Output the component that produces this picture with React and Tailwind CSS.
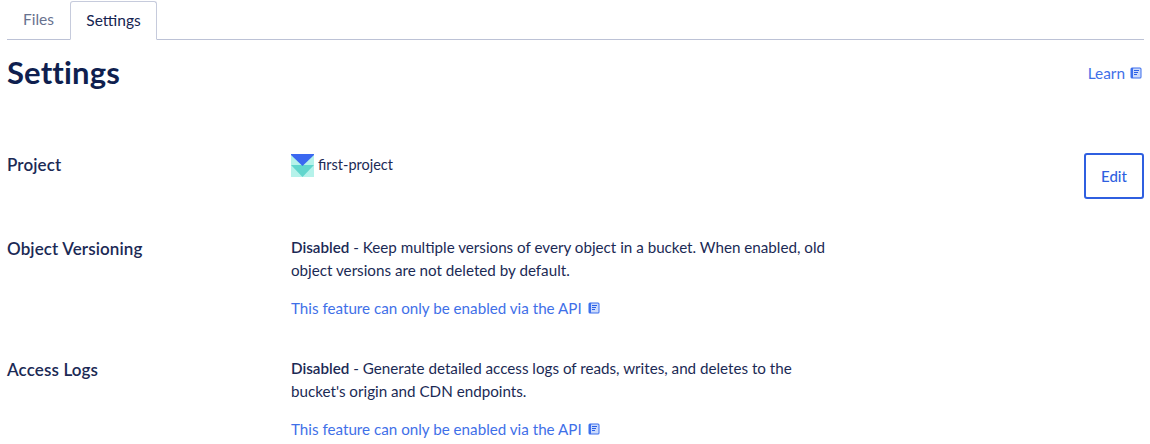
const BookIcon = () => (
  <svg width="12" height="12" viewBox="0 0 12 12" className="shrink-0">
    <rect x="0.5" y="0.5" width="11" height="11" rx="1.5" fill="#3d6fec" />
    <rect x="3" y="1.5" width="7.5" height="9" rx="0.5" fill="#cddbfb" />
    <rect x="4" y="3" width="5" height="1" fill="#2a5fe6" />
    <rect x="4" y="5" width="4" height="1" fill="#2a5fe6" />
    <rect x="4" y="7" width="3" height="1" fill="#2a5fe6" />
  </svg>
);

const ProjectIcon = () => (
  <svg width="23" height="23" viewBox="0 0 23 23" className="shrink-0">
    <rect width="23" height="23" fill="#b5f2ea" />
    <path d="M0 11 H23 L11.5 23 Z" fill="#62d6cd" />
    <path d="M0 0 H23 V1 L11.5 12 L0 1 Z" fill="#3b68f0" />
  </svg>
);

const ApiLink = () => (
  <a className="mt-[15px] flex items-center gap-[6px] text-[15.2px] leading-[22px] text-[#3f70e8]" href="#">
    <span>This feature can only be enabled via the API</span>
    <BookIcon />
  </a>
);

export default function App() {
  return (
    <div className="h-[444px] w-[1150px] overflow-hidden bg-white pl-[7px] pr-[6px] font-['Lato','Open_Sans',sans-serif] text-[#1b2a55]">
      {/* Tabs */}
      <div className="flex h-[40px] items-end border-b border-[#bcc2d6]">
        <div className="flex h-[39px] w-[63px] items-center justify-center text-[15.5px] text-[#68728f]">Files</div>
        <div className="-mb-px flex h-[39px] w-[87px] items-center justify-center rounded-t-[3px] border border-b-white border-[#c6cbdc] bg-white text-[15.5px] text-[#152450]">
          Settings
        </div>
      </div>

      {/* Header */}
      <div className="mt-[13px] flex h-[38px] items-center justify-between">
        <h1 className="text-[31px] font-bold leading-[38px] tracking-[0.15px] text-[#0f1f4f]">Settings</h1>
        <a className="mt-[3px] flex items-center gap-[5px] pr-[2px] text-[15.4px] text-[#3f70e8]" href="#">
          <span>Learn</span>
          <BookIcon />
        </a>
      </div>

      {/* Project */}
      <div className="mt-[63px] flex h-[46px] items-start">
        <div className="w-[284px] text-[17px] font-semibold leading-[22px] tracking-[0.12px]">Project</div>
        <div className="flex items-center gap-[4px] text-[14.5px] leading-[23px]">
          <ProjectIcon />
          <span className="-mt-[2px]">first-project</span>
        </div>
        <button className="-mt-[1px] ml-auto h-[46px] w-[60px] rounded-[3px] border-2 border-[#2f5fe0] text-[15px] font-medium text-[#2f5fe0]">
          Edit
        </button>
      </div>

      {/* Object Versioning */}
      <div className="mt-[36px] flex items-start">
        <div className="w-[284px] pt-[2px] text-[17px] font-semibold leading-[22px] tracking-[0.12px]">Object Versioning</div>
        <div className="w-[545px]">
          <p className="text-[15.2px] leading-[23px]">
            <b className="font-semibold">Disabled</b>
            <span> - Keep multiple versions of every object in a bucket. When enabled, old object versions are not deleted by default.</span>
          </p>
          <ApiLink />
        </div>
      </div>

      {/* Access Logs */}
      <div className="mt-[38px] flex items-start">
        <div className="w-[284px] pt-[2px] text-[17px] font-semibold leading-[22px] tracking-[0.12px]">Access Logs</div>
        <div className="w-[545px]">
          <p className="text-[15.2px] leading-[23px]">
            <b className="font-semibold">Disabled</b>
            <span> - Generate detailed access logs of reads, writes, and deletes to the bucket's origin and CDN endpoints.</span>
          </p>
          <ApiLink />
        </div>
      </div>
    </div>
  );
}
